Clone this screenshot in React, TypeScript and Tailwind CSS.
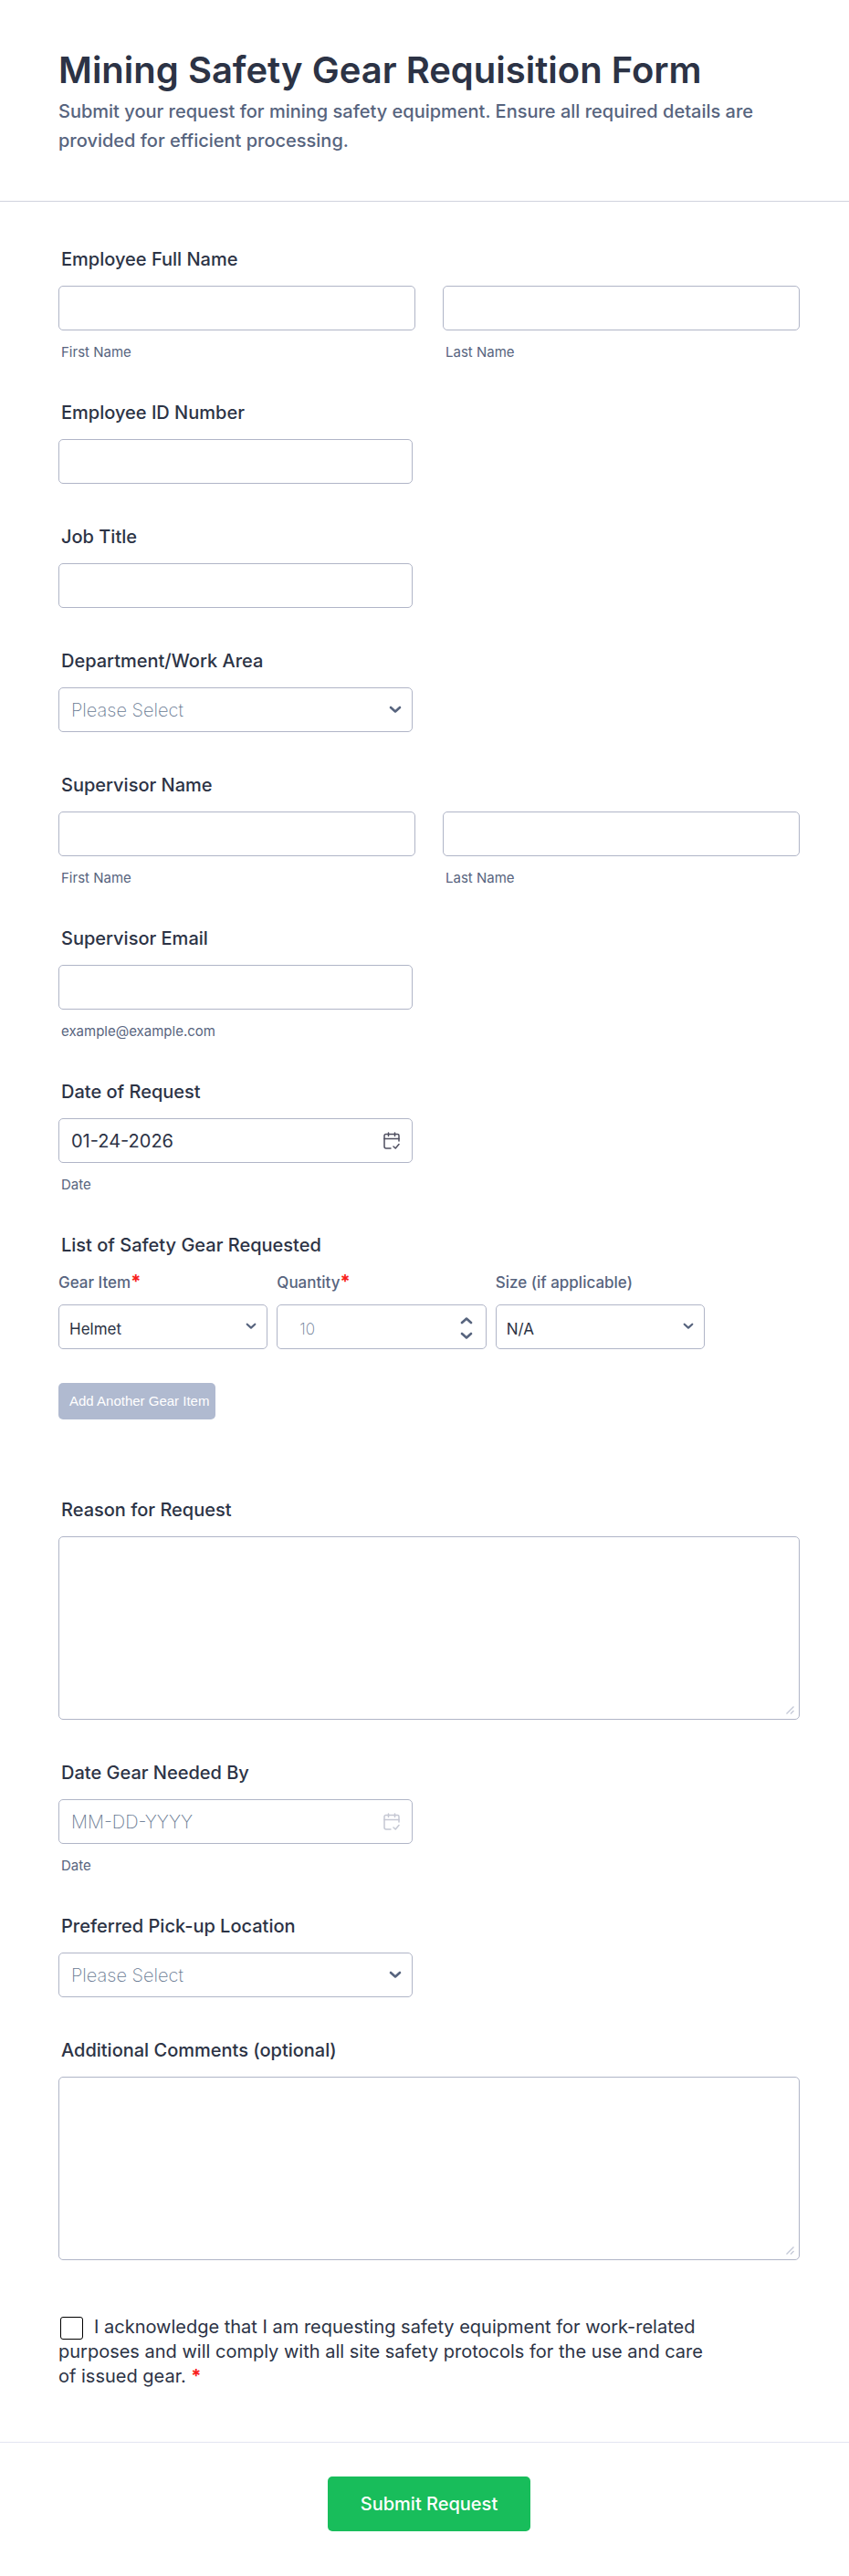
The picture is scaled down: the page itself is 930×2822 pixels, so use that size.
import { useState, type ReactNode } from 'react';

const INPUT = 'block h-[49px] w-full rounded-[5px] border border-[#b0b5c7] bg-white px-[13px] text-xl outline-none placeholder:font-extralight placeholder:text-[#687992] focus:border-blue-500';
const GEAR_INPUT = 'block h-[49px] w-full appearance-none rounded-[5px] border border-[#b0b5c7] bg-white pt-1 pr-10 text-[17px] leading-6 outline-none placeholder:font-extralight placeholder:text-[#687992] focus:border-blue-500';
const GEAR_LABEL = 'mb-3 block text-[17px] leading-6 font-medium text-[#57647e]';

const DEPARTMENTS = ['Underground Operations', 'Surface Operations', 'Processing Plant', 'Maintenance'];
const LOCATIONS = ['Main Warehouse', 'Site Office', 'Safety Station'];
const GEAR = ['Helmet', 'Gloves', 'Boots', 'Vest'];
const SIZES = ['N/A', 'S', 'M', 'L', 'XL'];

function Chevron({ className }: { className: string }) {
  return (
    <svg viewBox="0 0 14 9" fill="none" stroke="#57647e" strokeWidth="2.6" strokeLinecap="round" strokeLinejoin="round" className={className} aria-hidden="true">
      <path d="M2 2l5 4.5L12 2" />
    </svg>
  );
}

function Field({ label, htmlFor, children }: { label: string; htmlFor: string; children: ReactNode }) {
  return (
    <div>
      <label htmlFor={htmlFor} className="mb-[17px] block px-[3px] text-xl leading-6 font-medium">
        {label}
      </label>
      {children}
    </div>
  );
}

function SubLabel({ htmlFor, children }: { htmlFor: string; children: ReactNode }) {
  return (
    <label htmlFor={htmlFor} className="mt-4 block px-[3px] text-[15px] leading-4 text-[#57647e]">
      {children}
    </label>
  );
}

function NameField({ label, id }: { label: string; id: string }) {
  return (
    <Field label={label} htmlFor={`${id}-first`}>
      <div className="grid grid-cols-2 gap-[30px]">
        <div>
          <input id={`${id}-first`} type="text" className={INPUT} />
          <SubLabel htmlFor={`${id}-first`}>First Name</SubLabel>
        </div>
        <div>
          <input id={`${id}-last`} type="text" className={INPUT} />
          <SubLabel htmlFor={`${id}-last`}>Last Name</SubLabel>
        </div>
      </div>
    </Field>
  );
}

function TextField({ label, id, type = 'text', hint }: { label: string; id: string; type?: string; hint?: string }) {
  return (
    <Field label={label} htmlFor={id}>
      <div className="max-w-[388px]">
        <input id={id} type={type} className={INPUT} />
        {hint && <SubLabel htmlFor={id}>{hint}</SubLabel>}
      </div>
    </Field>
  );
}

function SelectField({ label, id, options }: { label: string; id: string; options: string[] }) {
  const [value, setValue] = useState('');

  return (
    <Field label={label} htmlFor={id}>
      <div className="relative max-w-[388px]">
        <select
          id={id}
          value={value}
          onChange={(e) => setValue(e.target.value)}
          className={`${INPUT} appearance-none ${value ? '' : 'font-extralight text-[#687992]'}`}
        >
          <option value="">Please Select</option>
          {options.map((o) => (
            <option key={o}>{o}</option>
          ))}
        </select>
        <Chevron className="pointer-events-none absolute top-5 right-3 w-[14px]" />
      </div>
    </Field>
  );
}

function DateField({ label, id, defaultValue }: { label: string; id: string; defaultValue?: string }) {
  return (
    <Field label={label} htmlFor={id}>
      <div className="max-w-[388px]">
        <div className="relative">
          <input id={id} type="text" placeholder="MM-DD-YYYY" defaultValue={defaultValue} className={INPUT} />
          <button type="button" aria-label="Open calendar" className="absolute top-[15px] right-[14px]">
            <svg
              viewBox="0 0 18 19"
              fill="none"
              strokeWidth="1.5"
              strokeLinecap="round"
              strokeLinejoin="round"
              className={`w-[18px] ${defaultValue ? 'stroke-[#4f4f60]' : 'stroke-[#c5c8d3]'}`}
            >
              <path d="M8 18H3a2 2 0 0 1-2-2V4a1.5 1.5 0 0 1 1.5-1.5h13A1.5 1.5 0 0 1 17 4v6" />
              <path d="M1 7.5h16M5.5 1v3.5M12.5 1v3.5M11 16l2.2 2L17 13.5" />
            </svg>
          </button>
        </div>
        <SubLabel htmlFor={id}>Date</SubLabel>
      </div>
    </Field>
  );
}

function AreaField({ label, id }: { label: string; id: string }) {
  return (
    <Field label={label} htmlFor={id}>
      <div className="relative">
        <textarea
          id={id}
          className="block h-[201px] w-full resize-none rounded-[5px] border border-[#b0b5c7] bg-white px-[13px] py-2 text-xl outline-none focus:border-blue-500"
        />
        <svg viewBox="0 0 9 9" stroke="#c3c8d6" strokeWidth="1.3" className="pointer-events-none absolute right-[6px] bottom-[6px] w-[9px]" aria-hidden="true">
          <path d="M.5 8.5l8-8M5 8.5L8.5 5" />
        </svg>
      </div>
    </Field>
  );
}

function Required() {
  return <span className="text-xl leading-none font-bold text-[#f81f1b]">*</span>;
}

function GearSelect({ label, id, options, required }: { label: string; id: string; options: string[]; required?: boolean }) {
  return (
    <div>
      <label htmlFor={id} className={GEAR_LABEL}>
        {label}
        {required && <Required />}
      </label>
      <div className="relative">
        <select id={id} className={`${GEAR_INPUT} pl-[11px]`}>
          {options.map((o) => (
            <option key={o}>{o}</option>
          ))}
        </select>
        <Chevron className="pointer-events-none absolute top-5 right-3 w-3" />
      </div>
    </div>
  );
}

function GearRow() {
  const [quantity, setQuantity] = useState('');
  const step = (by: number) => setQuantity(String(Math.max(0, Number(quantity) + by)));

  return (
    <div className="grid max-w-[708px] grid-cols-3 gap-[10px]">
      <GearSelect label="Gear Item" id="gear-item" options={GEAR} required />
      <div>
        <label htmlFor="gear-quantity" className={GEAR_LABEL}>
          Quantity
          <Required />
        </label>
        <div className="relative">
          <input
            id="gear-quantity"
            type="text"
            inputMode="numeric"
            placeholder="10"
            value={quantity}
            onChange={(e) => setQuantity(e.target.value.replace(/\D/g, ''))}
            className={`${GEAR_INPUT} pl-6`}
          />
          <div className="absolute top-[13px] right-[15px] flex flex-col gap-2">
            <button type="button" aria-label="Increase quantity" onClick={() => step(1)}>
              <Chevron className="w-[14px] rotate-180" />
            </button>
            <button type="button" aria-label="Decrease quantity" onClick={() => step(-1)}>
              <Chevron className="w-[14px]" />
            </button>
          </div>
        </div>
      </div>
      <GearSelect label="Size (if applicable)" id="gear-size" options={SIZES} />
    </div>
  );
}

export default function App() {
  return (
    <form className="min-h-screen bg-white font-[Inter,sans-serif] text-[#2c3345]" onSubmit={(e) => e.preventDefault()}>
      {/* Header */}
      <header className="border-b border-[#d0d3de] px-16 pt-[52px] pb-[50px]">
        <h1 className="text-[40px] leading-[50px] font-semibold">Mining Safety Gear Requisition Form</h1>
        <p className="mt-1 text-xl leading-8 font-medium text-[#57647e]">
          Submit your request for mining safety equipment. Ensure all required details are provided for efficient processing.
        </p>
      </header>

      {/* Fields */}
      <div className="flex flex-col gap-[46px] pt-[51px] pr-[54px] pb-[58px] pl-16">
        <NameField label="Employee Full Name" id="employee" />
        <TextField label="Employee ID Number" id="employee-id" />
        <TextField label="Job Title" id="job-title" />
        <SelectField label="Department/Work Area" id="department" options={DEPARTMENTS} />
        <NameField label="Supervisor Name" id="supervisor" />
        <TextField label="Supervisor Email" id="supervisor-email" type="email" hint="example@example.com" />
        <DateField label="Date of Request" id="request-date" defaultValue="01-24-2026" />

        <fieldset className="pb-[41px]">
          <legend className="mb-[17px] px-[3px] text-xl leading-6 font-medium">List of Safety Gear Requested</legend>
          <GearRow />
          <button type="button" className="mt-[37px] h-10 rounded-[5px] bg-[#b0bad0] pr-[7px] pl-3 font-['Liberation_Sans',sans-serif] text-[15px] text-white">
            Add Another Gear Item
          </button>
        </fieldset>

        <AreaField label="Reason for Request" id="reason" />
        <DateField label="Date Gear Needed By" id="needed-date" />
        <SelectField label="Preferred Pick-up Location" id="pickup" options={LOCATIONS} />
        <AreaField label="Additional Comments (optional)" id="comments" />

        <div className="max-w-[708px] pt-[14px] text-xl leading-[27px]">
          <input
            id="acknowledge"
            type="checkbox"
            className="mr-3 ml-[2px] inline-block h-[25px] w-[25px] appearance-none rounded-[3px] border border-black align-middle checked:bg-[#2c3345]"
          />
          <label htmlFor="acknowledge">
            I acknowledge that I am requesting safety equipment for work-related purposes and will comply with all site safety protocols for the use and care of issued gear.{' '}
            <Required />
          </label>
        </div>
      </div>

      {/* Footer */}
      <footer className="flex justify-center border-t border-[#e3e5f1] pt-[37px] pr-[54px] pb-[49px] pl-16">
        <button type="submit" className="h-[60px] rounded-[5px] bg-[#18bd5b] px-9 text-xl font-medium text-white">
          Submit Request
        </button>
      </footer>
    </form>
  );
}
